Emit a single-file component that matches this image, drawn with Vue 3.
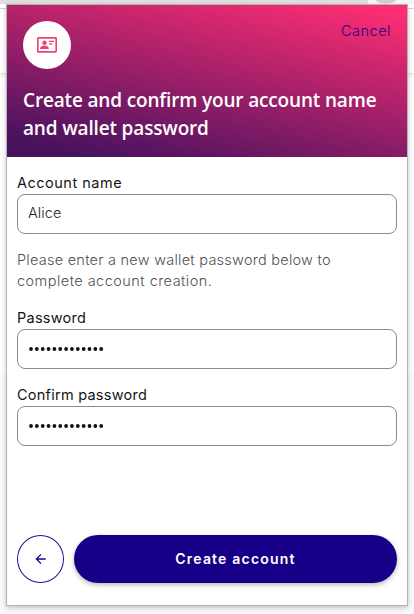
<script setup>
import { ref } from 'vue'

const accountName = ref('Alice')
const password = ref('alicepassword')
const confirmation = ref('alicepassword')
</script>

<template>
  <div class="page">
    <div class="tab-strip"><span class="tab-end"></span></div>
    <div class="toolbar"></div>
    <div class="page-lower"></div>
    <main class="popup">
      <header class="banner">
        <div class="banner-top">
          <div class="badge">
            <svg width="20" height="16" viewBox="0 0 20 16" fill="none">
              <rect x="0.8" y="0.9" width="18.4" height="14" rx="0.8" stroke="#ee426e" stroke-width="1.7" />
              <circle cx="7.5" cy="5.7" r="2.2" fill="#ee426e" />
              <path d="M3.2 12v-.9c0-1.7 2.3-2.6 4.3-2.6s4.2.9 4.2 2.6v.9z" fill="#ee426e" />
              <path d="M12 4.4h5M12 6.9h3.3" stroke="#ee426e" stroke-width="1.3" />
            </svg>
          </div>
          <a class="cancel">Cancel</a>
        </div>
        <h1><span class="line">Create and confirm your account name</span> <span class="line">and wallet password</span></h1>
      </header>
      <form class="form" @submit.prevent>
        <label class="name-label" for="name">Account name</label>
        <input id="name" v-model="accountName" type="text" />
        <p><span class="line">Please enter a new wallet password below to</span> <span class="line loose">complete account creation.</span></p>
        <label>Password</label>
        <div class="field">
          <svg width="100" height="8" fill="#111">
            <circle v-for="(c, n) in password" :key="n" :cx="3 + n * 5.85" cy="4" r="1.9" />
          </svg>
        </div>
        <label class="second-label">Confirm password</label>
        <div class="field">
          <svg width="100" height="8" fill="#111">
            <circle v-for="(c, n) in confirmation" :key="n" :cx="3 + n * 5.85" cy="4" r="1.9" />
          </svg>
        </div>
        <footer>
          <button class="back" type="button">
            <svg width="12" height="12" viewBox="0 0 12 12" fill="none" stroke="#170087" stroke-width="1.3">
              <path d="M10.6 6H1.4M6 1.4L1.4 6L6 10.6" />
            </svg>
          </button>
          <button class="create" type="submit"><span>Create account</span></button>
        </footer>
      </form>
    </main>
  </div>
</template>

<style>
body {
  margin: 0;
  overflow: hidden;
}
</style>

<style scoped>
* {
  box-sizing: border-box;
}
.page {
  position: relative;
  width: 414px;
  height: 614px;
  overflow: hidden;
  background: #fff;
  font-family: Inter, "Open Sans", sans-serif;
  font-size: 14.5px;
  color: #151515;
}
.tab-strip {
  height: 4px;
  background: #dfdfdf;
}
.tab-end {
  display: block;
  width: 46px;
  height: 4px;
  margin-left: 368px;
  background: radial-gradient(ellipse 12px 5px at 18px -1px, #d0d0d0 85%, #f7f7f7 95%);
}
.toolbar {
  height: 70px;
  border-bottom: 1px solid #e6e6e6;
  background: linear-gradient(#fff 4px, #d5d5d5 4px, #d5d5d5 5px, #fff 5px);
  box-shadow: 0 2px 4px rgba(0, 0, 0, 0.07);
}
.page-lower {
  height: 240px;
  margin-top: 300px;
  background: #fafafa;
}
.popup {
  position: absolute;
  top: 4px;
  left: 6px;
  width: 402px;
  height: 602px;
  border: 1px solid #b1b4b3;
  background: #fff;
  box-shadow: 0 2px 5px rgba(0, 0, 0, 0.22);
}
.banner {
  height: 152px;
  padding: 16px;
  background: linear-gradient(13deg, #48125f 8%, #ff2e73 97%);
}
.banner-top {
  display: flex;
  justify-content: space-between;
}
.badge {
  display: flex;
  align-items: center;
  justify-content: center;
  width: 48px;
  height: 48px;
  border-radius: 50%;
  background: #fff;
}
.cancel {
  height: 20px;
  line-height: 20px;
  color: #2b0085;
  font-weight: 300;
  letter-spacing: 0.5px;
}
.line {
  display: block;
  white-space: nowrap;
}
h1 {
  margin: 17px 0 0;
  color: #fff;
  font: 600 19px/28px "Open Sans", sans-serif;
  letter-spacing: -0.16px;
}
.form {
  display: flex;
  flex-direction: column;
  height: 448px;
  padding: 16px 10px 22px;
}
label {
  height: 21px;
  line-height: 19px;
  letter-spacing: 0.25px;
}
.name-label {
  letter-spacing: 0.5px;
}
input,
.field {
  flex: none;
  width: 380px;
  height: 40px;
  padding: 0 10px;
  border: 1px solid #8b8b8b;
  border-radius: 8px;
  background: #fff;
}
input {
  padding-bottom: 3px;
  outline: none;
  color: #252525;
  font: 300 14.5px/20px Inter, sans-serif;
  letter-spacing: 0.1px;
}
.field {
  display: flex;
  align-items: center;
  padding-bottom: 1px;
}
p {
  margin: 15px 0 17px;
  color: #515151;
  font-weight: 300;
  line-height: 21px;
  letter-spacing: 0.25px;
}
.loose {
  letter-spacing: 0.46px;
}
.second-label {
  margin-top: 16px;
}
footer {
  display: flex;
  gap: 10px;
  margin-top: auto;
}
button {
  display: flex;
  align-items: center;
  justify-content: center;
  height: 48px;
  padding: 0;
  font: 600 14px Inter, sans-serif;
}
.back {
  width: 47px;
  border: 1px solid #29118e;
  border-radius: 50%;
  background: #fff;
}
.create {
  flex: 1;
  padding-bottom: 1px;
  border: 0;
  border-radius: 24px;
  background: #170087;
  color: #fff;
  letter-spacing: 1.2px;
  box-shadow: 0 2px 5px rgba(0, 0, 0, 0.28);
}
</style>
